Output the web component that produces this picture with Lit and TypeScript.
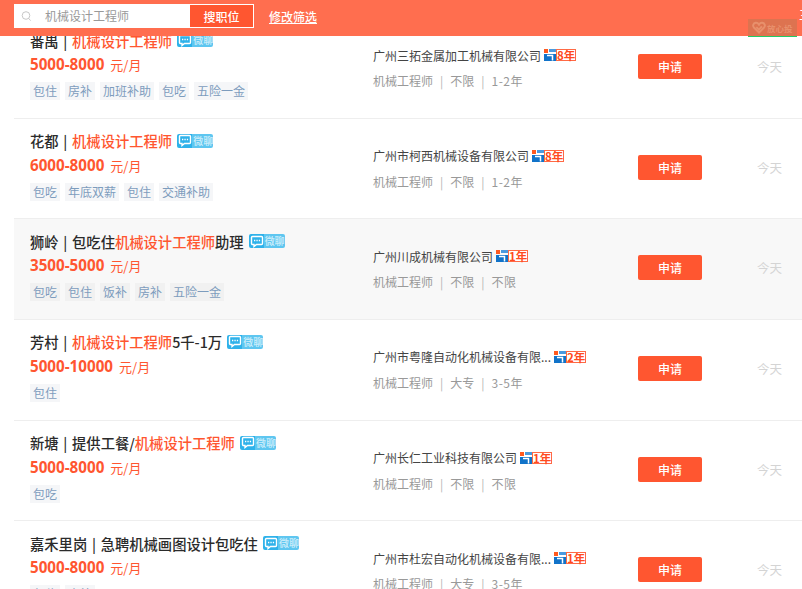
import { LitElement, html, css, svg } from 'lit';
import { customElement } from 'lit/decorators.js';

interface Job {
  area: string;
  before?: string;
  hot?: string;
  after?: string;
  salary: string;
  tags: string[];
  company: string;
  years: string;
  role: string;
  edu: string;
  exp: string;
}

const JOBS: Job[] = [
  { area: '番禺', hot: '机械设计工程师', salary: '5000-8000', tags: ['包住', '房补', '加班补助', '包吃', '五险一金'], company: '广州三拓金属加工机械有限公司', years: '8年', role: '机械工程师', edu: '不限', exp: '1-2年' },
  { area: '花都', hot: '机械设计工程师', salary: '6000-8000', tags: ['包吃', '年底双薪', '包住', '交通补助'], company: '广州市柯西机械设备有限公司', years: '8年', role: '机械工程师', edu: '不限', exp: '1-2年' },
  { area: '狮岭', before: '包吃住', hot: '机械设计工程师', after: '助理', salary: '3500-5000', tags: ['包吃', '包住', '饭补', '房补', '五险一金'], company: '广州川成机械有限公司', years: '1年', role: '机械工程师', edu: '不限', exp: '不限' },
  { area: '芳村', hot: '机械设计工程师', after: '5千-1万', salary: '5000-10000', tags: ['包住'], company: '广州市粤隆自动化机械设备有限...', years: '2年', role: '机械工程师', edu: '大专', exp: '3-5年' },
  { area: '新塘', before: '提供工餐/', hot: '机械设计工程师', salary: '5000-8000', tags: ['包吃'], company: '广州长仁工业科技有限公司', years: '1年', role: '机械工程师', edu: '不限', exp: '不限' },
  { area: '嘉禾里岗', before: '急聘机械画图设计包吃住', salary: '5000-8000', tags: ['包住', '房补'], company: '广州市杜宏自动化机械设备有限...', years: '1年', role: '机械工程师', edu: '大专', exp: '3-5年' },
];

const searchIcon = svg`<svg class="search-icon" width="11" height="12" viewBox="0 0 11 12" fill="none" stroke="#c8c8c8" stroke-width="1"><circle cx="5" cy="5.5" r="3.8"/><path d="M7.6 8.400 9.600 10.600"/></svg>`;
const chatIcon = svg`<svg width="14" height="13" viewBox="0 0 14 13"><path d="M2.500 1.500h9a1 1 0 0 1 1 1v6a1 1 0 0 1-1 1H6.500L4 11.500V9.500H2.500a1 1 0 0 1-1-1v-6a1 1 0 0 1 1-1z" fill="none" stroke="#fff" stroke-width="1.400"/><path d="M4 5.500h1.300M6.400 5.500h1.300M8.800 5.500h1.300" stroke="#fff" stroke-width="1.400"/></svg>`;
const logoIcon = svg`<svg width="12" height="12" viewBox="0 0 12 12"><rect width="4" height="4" fill="#ff5a1f"/><rect x="5" width="7" height="3" fill="#4a9ade"/><rect y="5" width="12" height="7" fill="#1173c9"/><path d="M3 6.500h5.500v5" fill="none" stroke="#fff" stroke-width="1.500"/></svg>`;
const heartIcon = svg`<svg width="14" height="13" viewBox="0 0 13 12" fill="none" stroke="#e8906c" stroke-width="1.800"><path d="M6.500 10.800 1.800 6C.4 4.500 1 2 3.400 1.600 4.800 1.400 5.800 2.200 6.500 3.400 7.200 2.200 8.200 1.400 9.600 1.600 12 2 12.600 4.500 11.200 6z"/><path d="M4 5.600 6.400 8 9.200 5"/></svg>`;

@customElement('job-row')
export class JobRow extends LitElement {
  static properties = {
    job: { type: Object },
    shaded: { type: Boolean },
  };

  declare job: Job;
  declare shaded: boolean;

  static styles = css`
    :host {
      display: block;
    }
    .row {
      display: flex;
      box-sizing: border-box;
      height: 100.6px;
      margin-left: 14px;
      padding-left: 16px;
      border-bottom: 1px solid #eeeeee;
      background: #fff;
    }
    .row.shaded {
      background: #f8f8f8;
    }
    .info {
      width: 343px;
      padding-top: 12px;
    }
    .title {
      display: flex;
      align-items: center;
      height: 20px;
      font-size: 14.3px;
      font-weight: 500;
      color: #2b2b2b;
      white-space: pre;
    }
    .bar {
      margin: 0 1.500px;
    }
    .hot {
      color: #ff5630;
    }
    .chat {
      display: flex;
      align-items: center;
      box-sizing: border-box;
      width: 36px;
      height: 14px;
      margin-left: 5px;
      border-radius: 2px;
      overflow: hidden;
      background: linear-gradient(to right, #2fb2ea 0 15px, #5ec6f0 15px);
      color: #cdeefb;
      font-size: 10px;
      line-height: 14px;
      white-space: nowrap;
    }
    .chat svg {
      flex: none;
      margin: 0 1px 0 1px;
    }
    .salary {
      display: flex;
      align-items: baseline;
      height: 20px;
      margin-top: 4px;
      color: #ff5630;
      font-size: 13px;
      line-height: 20px;
    }
    .salary b {
      margin-right: 6px;
      font-family: 'Open Sans', sans-serif;
      font-size: 15.200px;
      font-weight: 700;
    }
    .tags {
      display: flex;
      gap: 5px;
      margin-top: 8px;
    }
    .tag {
      height: 18px;
      padding: 0 3px;
      background: #f5f6f8;
      color: #7d9cbd;
      font-size: 12px;
      line-height: 18px;
    }
    .shaded .tag {
      background: #f1f1f1;
    }
    .company-col {
      width: 265px;
      padding-top: 27px;
    }
    .company {
      display: flex;
      align-items: center;
      height: 20px;
      color: #444;
      font-size: 12px;
      white-space: nowrap;
    }
    .years {
      display: flex;
      align-items: center;
      margin-left: 3px;
    }
    .years span {
      box-sizing: border-box;
      width: 20px;
      height: 12px;
      border: 1px solid #ff6a45;
      background: #fff;
      color: #ff4a20;
      font-size: 11.500px;
      font-weight: 700;
      line-height: 10px;
      text-align: center;
    }
    .meta {
      display: flex;
      margin-top: 6px;
      color: #999;
      font-size: 12px;
      line-height: 20px;
      white-space: pre;
    }
    .sep {
      margin: 0 7px;
      color: #b5b5b5;
    }
    .exp {
      letter-spacing: 0.500px;
    }
    .apply-col {
      width: 119px;
      padding-top: 36px;
    }
    .apply {
      display: block;
      box-sizing: border-box;
      width: 64px;
      height: 25px;
      padding: 0;
      border: 0;
      border-radius: 2px;
      background: #ff5630;
      color: #fff;
      font: 500 12px 'Noto Sans CJK SC', sans-serif;
    }
    .date {
      padding-top: 40px;
      color: #d4d4d4;
      font-size: 12.500px;
      line-height: 18px;
    }
  `;

  render() {
    const j = this.job;
    return html`
      <div class="row ${this.shaded ? 'shaded' : ''}">
        <div class="info">
          <div class="title">
            <span>${j.area} <span class="bar">|</span> ${j.before}<span class="hot">${j.hot}</span>${j.after}</span>
            <span class="chat">${chatIcon}微聊</span>
          </div>
          <div class="salary"><b>${j.salary}</b>元/月</div>
          <div class="tags">${j.tags.map((t) => html`<span class="tag">${t}</span>`)}</div>
        </div>
        <div class="company-col">
          <div class="company">
            ${j.company}
            <span class="years">${logoIcon}<span>${j.years}</span></span>
          </div>
          <div class="meta">${j.role}<span class="sep">|</span>${j.edu}<span class="sep">|</span><span class="exp">${j.exp}</span></div>
        </div>
        <div class="apply-col"><button class="apply">申请</button></div>
        <div class="date">今天</div>
      </div>
    `;
  }
}

@customElement('app-root')
export class AppRoot extends LitElement {
  static styles = css`
    :host {
      display: block;
      position: relative;
      width: 802px;
      height: 589px;
      overflow: hidden;
      background: #fff;
      font-family: 'Noto Sans CJK SC', 'Liberation Sans', sans-serif;
    }
    .list {
      padding-top: 18.200px;
    }
    .header {
      position: absolute;
      top: 0;
      left: 0;
      right: 0;
      display: flex;
      align-items: center;
      box-sizing: border-box;
      height: 36px;
      padding: 0 0 4px 14px;
      background: #ff6e4f;
    }
    .search {
      display: flex;
      align-items: center;
      box-sizing: border-box;
      width: 240px;
      height: 24px;
      background: #fff;
    }
    .search-icon {
      margin-left: 7px;
    }
    .keyword {
      flex: 1;
      margin: 0 0 2px 13px;
      color: #999;
      font-size: 12px;
    }
    .go {
      box-sizing: border-box;
      width: 65px;
      height: 24px;
      padding: 0;
      border: 1px solid #fff;
      background: #ff5630;
      color: #fff;
      font: 500 12px 'Noto Sans CJK SC', sans-serif;
    }
    .edit {
      margin-left: 15px;
      color: #fff;
      font-size: 12px;
      font-weight: 500;
      text-decoration: underline;
    }
    .clipped {
      position: absolute;
      top: 7px;
      left: 799px;
      color: #fff;
      font-size: 12px;
      line-height: 16px;
    }
    .trust {
      position: absolute;
      top: 19px;
      left: 748px;
      display: flex;
      align-items: center;
      box-sizing: border-box;
      width: 49px;
      height: 18px;
      padding-left: 4px;
      border-bottom: 1px solid #22cc66;
      background: #dd7350;
      color: #e8906c;
      font-size: 8.500px;
      font-weight: 700;
      white-space: nowrap;
    }
    .trust svg {
      flex: none;
      margin-right: 1px;
    }
  `;

  render() {
    return html`
      <div class="list">
        ${JOBS.map((job, i) => html`<job-row .job=${job} .shaded=${i === 2}></job-row>`)}
      </div>
      <div class="header">
        <div class="search">
          ${searchIcon}
          <span class="keyword">机械设计工程师</span>
          <button class="go">搜职位</button>
        </div>
        <span class="edit">修改筛选</span>
        <span class="clipped">三</span>
      </div>
      <div class="trust">${heartIcon}放心投</div>
    `;
  }
}
